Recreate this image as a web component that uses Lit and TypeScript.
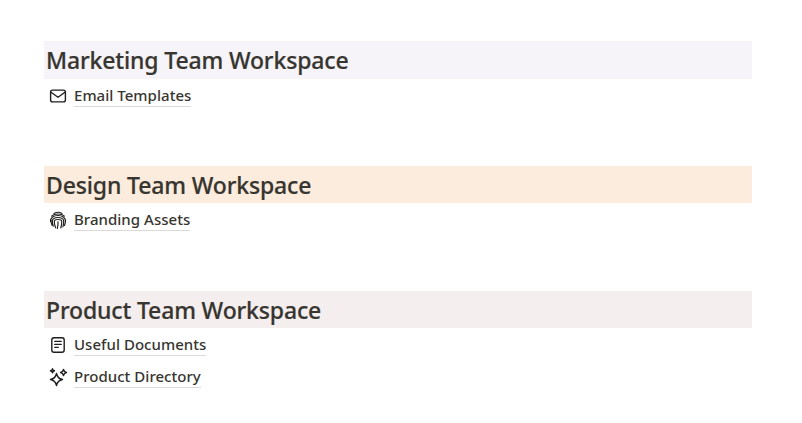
import { LitElement, html, css, svg } from 'lit';
import { customElement } from 'lit/decorators.js';

const icons: Record<string, unknown> = {
  mail: svg`<rect x="2.600" y="4.100" width="14.800" height="11.800" rx="2" /><path d="M3 6.200l7 5 7-5" />`,
  print: svg`<g stroke-width="1.150"><path d="M6 3.400c2.500-1.400 5.500-1.400 8 0" /><path d="M3.600 6.200c3-3 9.800-3 12.800 0" /><path d="M2.500 11.500c-.1-3.800 3.300-6 7.500-6s7.600 2.200 7.500 6" /><path d="M4 15.200c-.9-1.800-1.300-3.600-1-5M5.300 16.200c-.8-2-1.100-3.900-.9-5.600.3-2 2.800-3.100 5.600-3.100s5.300 1.100 5.600 3.100c.3 2.200 0 4.300-.7 6.300" /><path d="M7.600 17.800c-.9-2.300-1.400-4.600-1.300-6.600.1-1 1.700-1.700 3.700-1.700s3.600.7 3.700 1.700c.2 2.500-.2 4.700-.9 6.800" /><path d="M10 11.800c.1 2.400-.1 4.500-.7 6.700" /><path d="M16.500 15.500c.5-1.500.9-3 1-4.500" /></g>`,
  doc: svg`<rect x="3.800" y="2.700" width="12.400" height="14.600" rx="2.200" /><path d="M6.800 6.400h6.400M6.800 9.400h6.400M6.800 12.400h3.400" />`,
  sparkle: svg`<path d="M8.500 6.500c.8 3.800 2.300 5.300 6 6-3.700.8-5.200 2.200-6 6-.8-3.800-2.300-5.200-6-6 3.700-.7 5.200-2.200 6-6z" /><path d="M15.500 2.500c.4 1.900 1.100 2.600 3 3-1.900.4-2.600 1.100-3 3-.4-1.900-1.100-2.600-3-3 1.900-.4 2.600-1.100 3-3z" /><path d="M4.500 1.800c.3 1.200.8 1.700 2 2-1.200.3-1.700.8-2 2-.3-1.200-.8-1.700-2-2 1.200-.3 1.700-.8 2-2z" />`,
};

const sections = [
  { title: 'Marketing Team Workspace', tone: 'lilac', items: [{ icon: 'mail', label: 'Email Templates' }] },
  { title: 'Design Team Workspace', tone: 'peach', items: [{ icon: 'print', label: 'Branding Assets' }] },
  {
    title: 'Product Team Workspace',
    tone: 'rose',
    items: [
      { icon: 'doc', label: 'Useful Documents' },
      { icon: 'sparkle', label: 'Product Directory' },
    ],
  },
];

@customElement('app-root')
export class AppRoot extends LitElement {
  static styles = css`
    :host {
      display: block;
      padding: 41.4px 50px 0 44px;
      font-family: 'Noto Sans', 'Open Sans', sans-serif;
      color: #37352f;
      background: #fff;
    }

    section {
      height: 124.8px;
    }

    h2 {
      margin: 0;
      height: 37.2px;
      padding: 0 2px;
      font-size: 23px;
      font-weight: 500;
      line-height: 38px;
      letter-spacing: -0.15px;
      -webkit-text-stroke: 0.2px #37352f;
    }

    .lilac {
      background: #f6f3f9;
    }
    .peach {
      background: #fbecdd;
    }
    .rose {
      background: #f4eeee;
    }

    ul {
      list-style: none;
      margin: 0;
      padding: 1px 0 0;
    }

    li {
      display: flex;
      align-items: center;
      height: 32px;
      padding-left: 4px;
    }

    svg {
      width: 20px;
      height: 20px;
      margin-right: 6px;
      fill: none;
      stroke: #1f1e1c;
      stroke-width: 1.4;
      stroke-linecap: round;
      stroke-linejoin: round;
    }

    a {
      font-size: 15px;
      font-weight: 500;
      line-height: 21px;
      letter-spacing: 0.03px;
      color: #37352f;
      text-decoration: none;
      border-bottom: 1px solid #dcdbd9;
    }
  `;

  render() {
    return sections.map(
      (s) => html`
        <section>
          <h2 class=${s.tone}>${s.title}</h2>
          <ul>
            ${s.items.map(
              (it) => html`
                <li>
                  <svg viewBox="0 0 20 20">${icons[it.icon]}</svg>
                  <a href="#">${it.label}</a>
                </li>
              `,
            )}
          </ul>
        </section>
      `,
    );
  }
}
